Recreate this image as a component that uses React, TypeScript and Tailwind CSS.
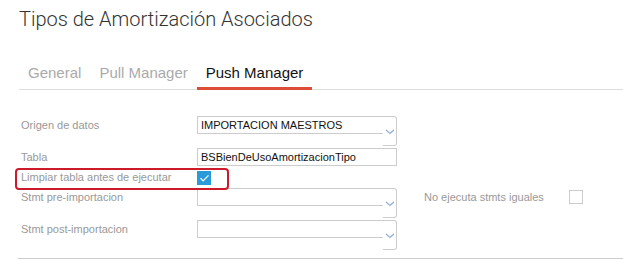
import { Check } from 'lucide-react'

function Chevron() {
  return (
    <svg width="10" height="6" viewBox="0 0 10 6" className="absolute left-[2px] top-[12px]">
      <path d="M1 1 L5 4.5 L9 1" fill="none" stroke="#8fb4d9" strokeWidth="1.3" />
    </svg>
  )
}

function SelectField({ value }: { value?: string }) {
  return (
    <div className="flex h-[30px] w-[200px]">
      <div className="h-[18px] w-[186px] border-y border-l border-[#cccccc] px-[3px] text-[11px] leading-[16px] text-[#111]">
        {value}
      </div>
      <div className="relative h-[30px] w-[14px] rounded-r-[3px] border-y border-r border-[#cccccc]">
        <Chevron />
      </div>
    </div>
  )
}

function Label({ children }: { children: React.ReactNode }) {
  return <div className="w-[197px] shrink-0 pl-[21px] text-[11px] leading-[18px] text-[#999]">{children}</div>
}

export default function App() {
  return (
    <div className="relative h-[260px] w-[623px] overflow-hidden bg-white font-['Liberation_Sans',Arial,sans-serif]">
      <h1 className="pl-[19px] pt-[5px] font-['Roboto',sans-serif] text-[20px] font-light leading-[28px] text-[#333]">
        Tipos de Amortización Asociados
      </h1>

      <div className="ml-[19px] mt-[30px] flex border-b border-[#dddddd]">
        <div className="px-[9px] pb-[6px] text-[15px] leading-[20px] text-[#aaa]">General</div>
        <div className="px-[9px] pb-[6px] text-[15px] leading-[20px] text-[#aaa]">Pull Manager</div>
        <div className="-mb-px border-b-[3px] border-[#dd4b39] px-[9px] pb-[4px] text-[15px] leading-[20px] text-[#111]">Push Manager</div>
      </div>

      <div className="mt-[26px] flex flex-col">
        <div className="flex">
          <Label>Origen de datos</Label>
          <SelectField value="IMPORTACION MAESTROS" />
        </div>
        <div className="mt-[2px] flex">
          <Label>Tabla</Label>
          <div className="h-[18px] w-[200px] border border-[#cccccc] px-[3px] text-[11px] leading-[16px] text-[#111]">
            BSBienDeUsoAmortizacionTipo
          </div>
        </div>
        <div className="flex h-[22px] pt-[2px]">
          <Label>Limpiar tabla antes de ejecutar</Label>
          <div className="mt-[3px] flex h-[14px] w-[14px] items-center justify-center bg-[#2b9ad8]">
            <Check size={11} strokeWidth={2.5} color="white" />
          </div>
        </div>
        <div className="flex">
          <Label>Stmt pre-importacion</Label>
          <SelectField />
          <div className="ml-[27px] w-[145px] text-[11px] leading-[18px] text-[#999]">No ejecuta stmts iguales</div>
          <div className="mt-[2px] h-[14px] w-[14px] border border-[#cccccc] bg-white" />
        </div>
        <div className="mt-[2px] flex">
          <Label>Stmt post-importacion</Label>
          <SelectField />
        </div>
      </div>

      <div className="ml-[18px] mt-[8px] border-t border-[#cccccc]" />

      <div className="pointer-events-none absolute left-[15px] top-[168px] h-[22px] w-[214px] rounded-[4px] border-2 border-[#cc1a2b]" />
    </div>
  )
}
